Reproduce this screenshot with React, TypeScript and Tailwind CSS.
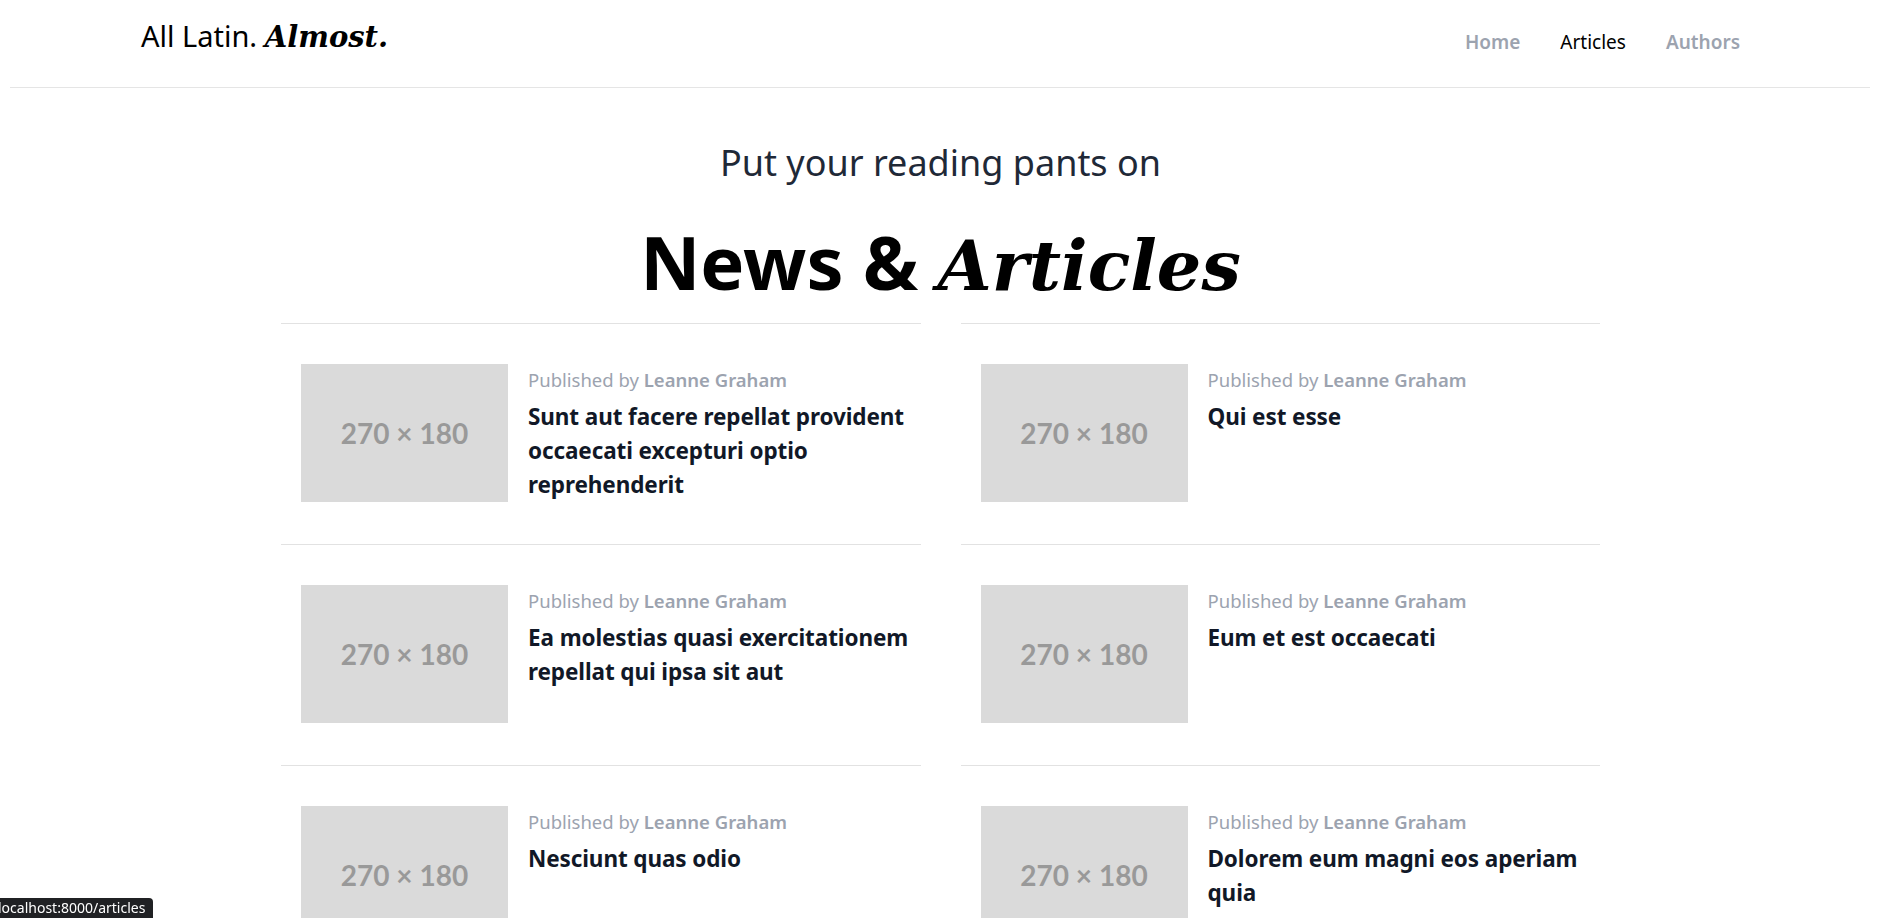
import React from "react";

const posts = [
  "Sunt aut facere repellat provident occaecati excepturi optio reprehenderit",
  "Qui est esse",
  "Ea molestias quasi exercitationem repellat qui ipsa sit aut",
  "Eum et est occaecati",
  "Nesciunt quas odio",
  "Dolorem eum magni eos aperiam quia",
];

const sans = "font-['Noto_Sans',sans-serif]";
const serif = "font-['DejaVu_Serif',serif]";

const Card = ({ title }: { title: string }) => (
  <div className="border-t border-[#e2e2e2] pl-[20px] pr-[10px] pt-[40px] pb-[42px] flex gap-[20px]">
    <div className="w-[207px] h-[138px] shrink-0 bg-[#dadada] flex items-center justify-center">
      <span className="font-['Lato',sans-serif] font-bold text-[28px] text-[#999999]">270 × 180</span>
    </div>
    <div className="flex flex-col pt-[2px]">
      <p className="text-[18.5px] text-[#9ca3af] leading-[28px]">
        Published by <span className="font-semibold">Leanne Graham</span>
      </p>
      <h3 className="mt-[6px] text-[22.5px] font-bold leading-[34px] text-[#111827] tracking-[-0.1px]">{title}</h3>
    </div>
  </div>
);

export default function App() {
  return (
    <div className={`${sans} bg-white min-h-screen`}>
      <header className="ml-[10px] mr-[18px] border-b border-[#e5e5e5] h-[88px] flex items-center justify-between pl-[131px] pr-[130px]">
        <div className="text-[29px] text-black pb-[14px]">
          All Latin. <span className={`${serif} italic font-bold`}>Almost.</span>
        </div>
        <nav className="flex gap-[40px] text-[19px] pb-[2px]">
          <a className="text-[#9ca3af] font-semibold">Home</a>
          <a className="text-black">Articles</a>
          <a className="text-[#9ca3af] font-semibold">Authors</a>
        </nav>
      </header>
      <main className="ml-[281px] w-[1319px]">
        <h2 className="text-center text-[36px] text-[#1f2937] mt-[50px] leading-[50px]">Put your reading pants on</h2>
        <h1 className="text-center text-[74px] font-bold text-black leading-[100px] mt-[24px] mb-[7px]">
          News &amp; <span className={`${serif} italic text-[70px]`}>Articles</span>
        </h1>
        <div className="grid grid-cols-2 gap-x-[40px]">
          {posts.map((p) => (
            <Card key={p} title={p} />
          ))}
        </div>
      </main>
      <div className="fixed bottom-0 left-0 bg-[#202124] text-white text-[14px] leading-[20px] h-[20px] pr-[8px] rounded-tr-[4px] overflow-hidden">
        <span className="ml-[-2px] block">localhost:8000/articles</span>
      </div>
    </div>
  );
}
